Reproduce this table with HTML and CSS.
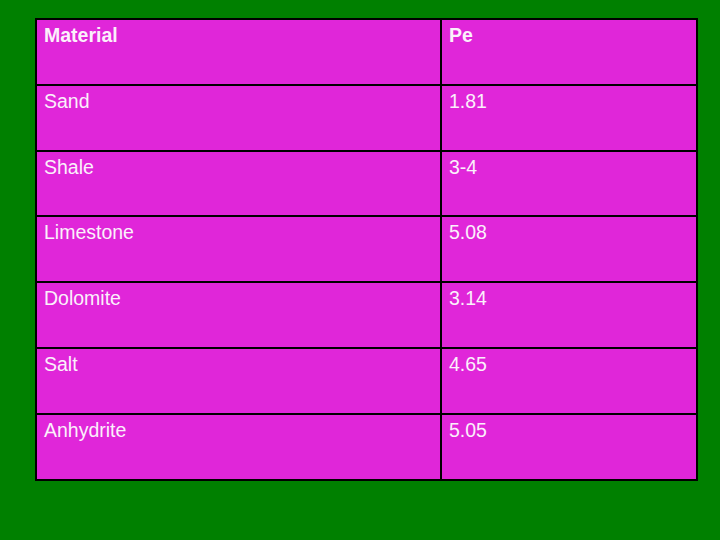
FILE: index.html
```html
<!DOCTYPE html>
<html>
<head>
<meta charset="utf-8">
<link rel="stylesheet" href="styles.css">
</head>
<body>
<table class="data">
<tr><th class="col1">Material</th><th>Pe</th></tr>
<tr><td>Sand</td><td>1.81</td></tr>
<tr><td>Shale</td><td>3-4</td></tr>
<tr><td>Limestone</td><td>5.08</td></tr>
<tr><td>Dolomite</td><td>3.14</td></tr>
<tr><td>Salt</td><td>4.65</td></tr>
<tr><td>Anhydrite</td><td>5.05</td></tr>
</table>
</body>
</html>
```
FILE: styles.css
```css
html, body {
  margin: 0;
  padding: 0;
  background: #008000;
  width: 720px;
  height: 540px;
  overflow: hidden;
}
body {
  padding: 18px 0 0 35px;
  box-sizing: border-box;
  font-family: "Liberation Sans", Arial, sans-serif;
}
.data {
  border-collapse: collapse;
  width: 663px;
  table-layout: fixed;
}
.data th, .data td {
  border: 2px solid #000;
  background: #e026d9;
  color: #fbf0fb;
  font-size: 19.5px;
  line-height: 22px;
  height: 65.8px;
  box-sizing: border-box;
  padding: 4px 7px 0;
  text-align: left;
  vertical-align: top;
}
.data th {
  font-weight: bold;
}
.data .col1 {
  width: 405px;
}
```
